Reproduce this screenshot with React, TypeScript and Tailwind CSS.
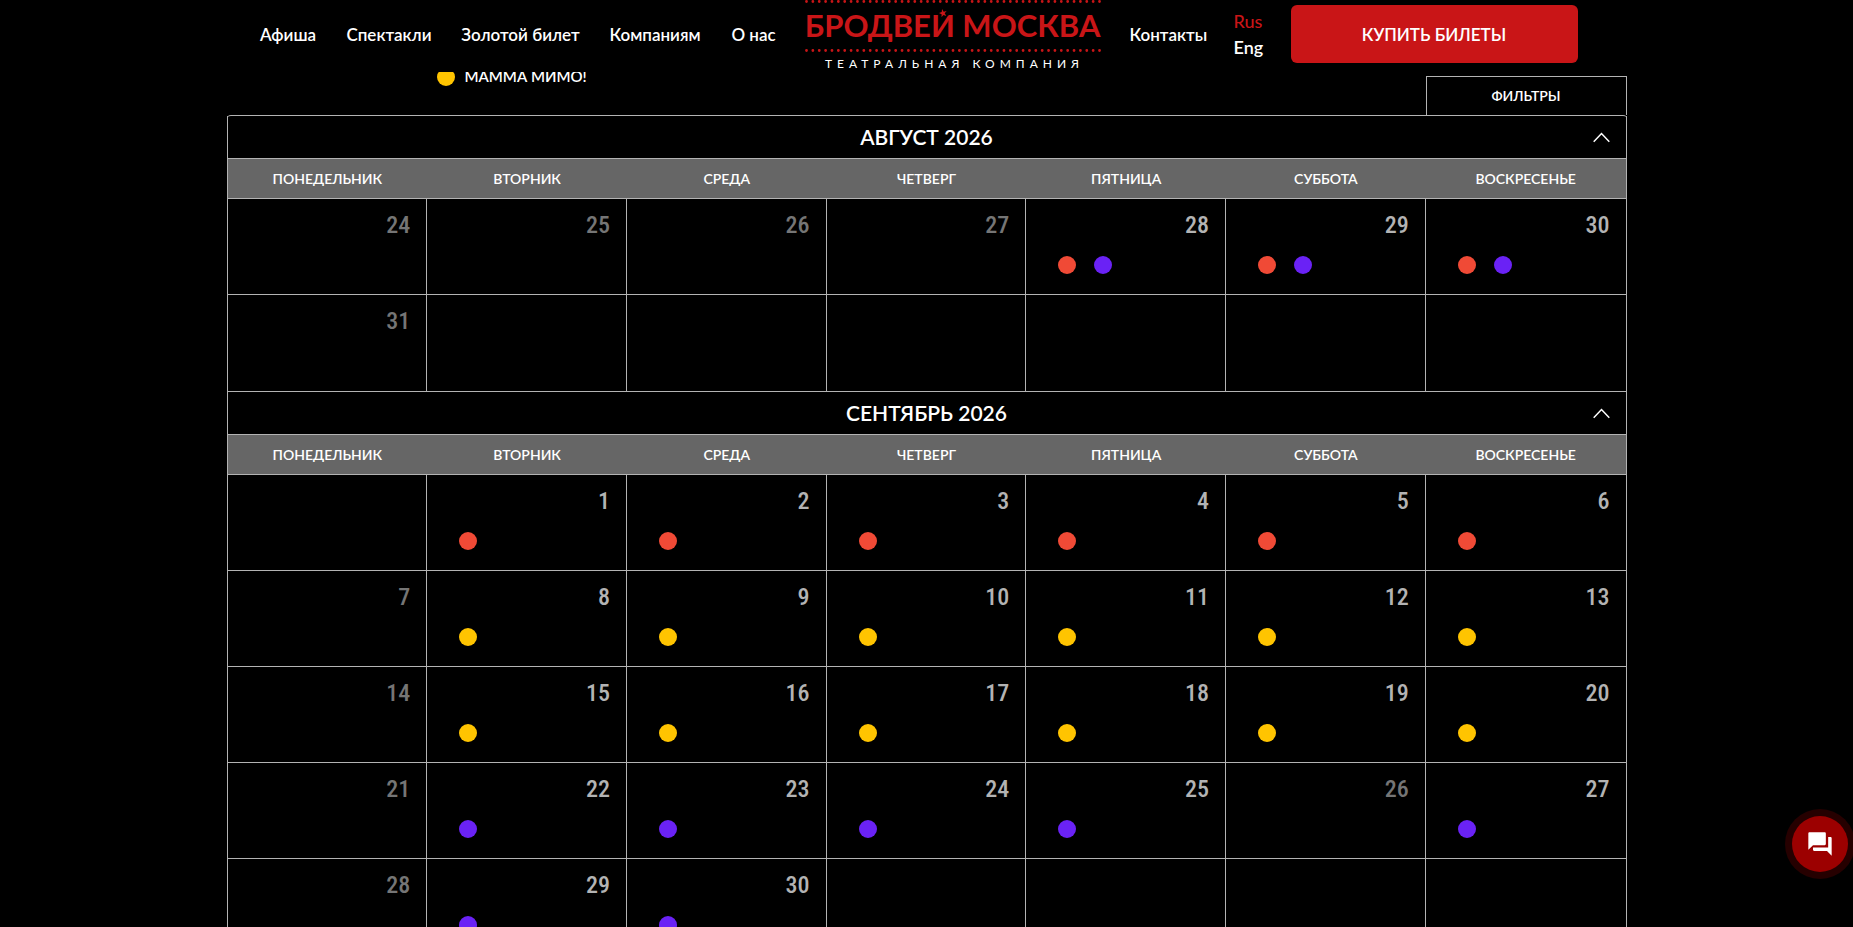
import { useState } from "react";
import { MdForum } from "react-icons/md";

type Show = "red" | "violet" | "yellow";

interface Day {
  date?: number;
  shows?: Show[];
}

interface Month {
  title: string;
  weeks: Day[][];
}

const weekdays = [
  "Понедельник",
  "Вторник",
  "Среда",
  "Четверг",
  "Пятница",
  "Суббота",
  "Воскресенье",
];

const dotClass: Record<Show, string> = {
  red: "bg-[#f04a36]",
  violet: "bg-[#6a22f5]",
  yellow: "bg-[#ffc400]",
};

function week(first: number, shows: (Show[] | null)[]): Day[] {
  return shows.map((s, i) => ({ date: first + i, shows: s ?? undefined }));
}

const R: Show[] = ["red"];
const Y: Show[] = ["yellow"];
const V: Show[] = ["violet"];
const RV: Show[] = ["red", "violet"];

const months: Month[] = [
  {
    title: "Август 2026",
    weeks: [
      week(24, [null, null, null, null, RV, RV, RV]),
      [{ date: 31 }, {}, {}, {}, {}, {}, {}],
    ],
  },
  {
    title: "Сентябрь 2026",
    weeks: [
      [{}, ...week(1, [R, R, R, R, R, R])],
      week(7, [null, Y, Y, Y, Y, Y, Y]),
      week(14, [null, Y, Y, Y, Y, Y, Y]),
      week(21, [null, V, V, V, V, null, V]),
      [...week(28, [null, V, V]), {}, {}, {}, {}],
    ],
  },
];

const navLinks = [
  { label: "Афиша", width: "w-[61px]" },
  { label: "Спектакли", width: "w-[87px]" },
  { label: "Золотой билет", width: "w-[122px]" },
  { label: "Компаниям", width: "w-[93px]" },
  { label: "О нас", width: "w-[50px]" },
];

function DotRow() {
  return (
    <svg className="h-[3px] w-full" viewBox="0 0 298 3" aria-hidden="true">
      <path
        d="M2.500 1.500H296.500"
        fill="none"
        stroke="#c91517"
        strokeWidth="2.8"
        strokeLinecap="round"
        strokeDasharray="0 6.37"
      />
    </svg>
  );
}

function Logo() {
  return (
    <a
      href="#home"
      aria-label="Бродвей Москва"
      className="flex w-[298px] shrink-0 flex-col items-center"
    >
      <DotRow />
      <span className="flex h-[46px] text-[31px] leading-[44px] font-bold whitespace-nowrap text-[#c91517]">
        БРОДВЕ
        <span className="relative">
          И
          <svg
            className="absolute top-1.5 left-1/2 size-2 -translate-x-1/2"
            viewBox="0 0 24 24"
            fill="currentColor"
            aria-hidden="true"
          >
            <path
              d="M12 0l3 8.500 9 .3-7.200 5.500L19.400 23 12 18l-7.400 5 2.600-8.700L0 8.800l9-.3z"
              transform="rotate(-14 12 12)"
            />
          </svg>
        </span>
        &nbsp;МОСКВА
      </span>
      <DotRow />
      <span className="mt-1 pl-1 text-xs leading-4 font-normal tracking-[5px] whitespace-nowrap text-white">
        ТЕАТРАЛЬНАЯ КОМПАНИЯ
      </span>
    </a>
  );
}

function Header() {
  return (
    <header className="sticky top-0 z-10 h-[72px] bg-black">
      <div className="mx-auto flex max-w-[1400px] items-start pl-[31px] text-[17px] leading-6 font-semibold">
        <nav className="flex gap-[27px] pt-[23px]">
          {navLinks.map((l) => (
            <a
              key={l.label}
              href="#"
              className={`${l.width} flex justify-center whitespace-nowrap`}
            >
              {l.label}
            </a>
          ))}
        </nav>
        <div className="ml-[25px]">
          <Logo />
        </div>
        <a href="#contacts" className="mt-[23px] ml-7 w-[76px]">
          Контакты
        </a>
        <div className="mt-2 ml-7 flex w-8 flex-col text-lg leading-[26px]">
          <a href="#rus" className="font-medium text-[#c91517]">
            Rus
          </a>
          <a href="#eng">Eng</a>
        </div>
        <button
          type="button"
          className="mt-[5px] ml-[25px] h-[58px] w-[287px] shrink-0 rounded-md bg-[#c91517] pt-0.5"
        >
          КУПИТЬ БИЛЕТЫ
        </button>
      </div>
    </header>
  );
}

function MonthTable({ month }: { month: Month }) {
  const [open, setOpen] = useState(true);

  return (
    <section className="border-x border-[#b3b3b3]">
      <button
        type="button"
        aria-expanded={open}
        onClick={() => setOpen(!open)}
        className="relative flex h-[43px] w-full items-center justify-center border-b border-[#b3b3b3] text-[21px] leading-7 font-semibold uppercase"
      >
        {month.title}
        <svg
          className="absolute top-4 right-4 h-[11px] w-[17px]"
          viewBox="0 0 17 11"
          fill="none"
          stroke="currentColor"
          strokeWidth="1.5"
          aria-hidden="true"
        >
          <path d="M.7 9.700 8.500 1.500l7.800 8.200" />
        </svg>
      </button>
      {open && (
        <table className="w-full table-fixed border-separate border-spacing-0">
          <thead>
            <tr>
              {weekdays.map((d) => (
                <th
                  key={d}
                  scope="col"
                  className="h-10 border-b border-[#b3b3b3] bg-[#666] p-0 text-sm leading-5 font-semibold uppercase"
                >
                  {d}
                </th>
              ))}
            </tr>
          </thead>
          <tbody>
            {month.weeks.map((days, w) => (
              <tr
                key={w}
                className={w === month.weeks.length - 1 ? "h-[97px]" : "h-24"}
              >
                {days.map((day, i) => (
                  <td
                    key={i}
                    className="border-r border-b border-[#b3b3b3] p-0 align-top last:border-r-0"
                  >
                    <div
                      className={`h-[57px] pt-3 pr-4 text-right font-['Roboto_Condensed','Roboto',sans-serif] text-2xl leading-7 font-medium ${
                        day.shows ? "text-[#b3b3b3]" : "text-[#757575]"
                      }`}
                    >
                      {day.date}
                    </div>
                    {day.shows && (
                      <div className="flex gap-[18px] pl-8">
                        {day.shows.map((s) => (
                          <span
                            key={s}
                            className={`size-[18px] rounded-full ${dotClass[s]}`}
                          />
                        ))}
                      </div>
                    )}
                  </td>
                ))}
              </tr>
            ))}
          </tbody>
        </table>
      )}
    </section>
  );
}

export default function App() {
  return (
    <div className="h-screen overflow-hidden bg-black font-['Lato','Open_Sans',sans-serif] text-white">
      <Header />
      <main className="mx-auto -mt-1 max-w-[1400px]">
        <div className="flex items-start justify-between">
          <div className="ml-[210px] flex items-start gap-2.5 text-[15px] leading-4 font-semibold">
            <span className="size-[18px] rounded-full bg-[#ffc400]" />
            МАММА МИМО!
          </div>
          <button
            type="button"
            className="mt-2 h-[39px] w-[201px] border border-b-0 border-[#b3b3b3] text-sm leading-5 font-semibold"
          >
            ФИЛЬТРЫ
          </button>
        </div>
        <div className="rounded-t border-t border-[#b3b3b3]">
          {months.map((m) => (
            <MonthTable key={m.title} month={m} />
          ))}
        </div>
      </main>
      <button
        type="button"
        aria-label="Открыть чат"
        className="fixed right-[5px] bottom-[55px] flex size-14 items-center justify-center rounded-full bg-[#9c0000] ring-7 ring-[#260000]"
      >
        <MdForum className="size-7" />
      </button>
    </div>
  );
}
